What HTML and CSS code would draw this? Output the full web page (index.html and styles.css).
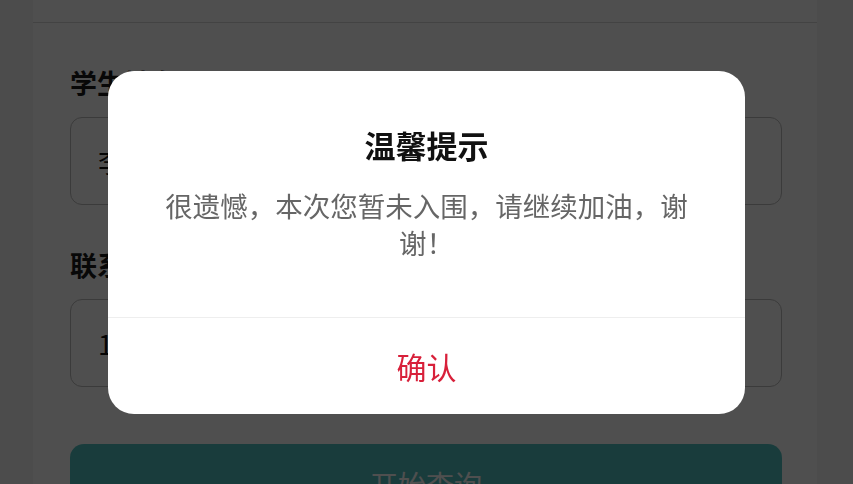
FILE: index.html
```html
<!DOCTYPE html>
<html lang="zh-CN">
<head>
<meta charset="utf-8">
<title>查询</title>
<link rel="stylesheet" href="styles.css">
</head>
<body>
<div class="page">
  <div class="topbar"></div>
  <form class="form">
    <div class="label">学生姓名</div>
    <div class="field">李明</div>
    <div class="label label-second">联系电话</div>
    <div class="field">13800000000</div>
    <button type="button" class="submit">开始查询</button>
  </form>
</div>
<div class="mask">
  <div class="dialog">
    <div class="dialog-body">
      <div class="dialog-title">温馨提示</div>
      <div class="dialog-text">很遗憾，本次您暂未入围，请继续加油，谢谢！</div>
    </div>
    <div class="dialog-footer">确认</div>
  </div>
</div>
</body>
</html>
```
FILE: styles.css
```css
* { box-sizing: border-box; }
html, body { margin: 0; padding: 0; }
body {
  width: 853px;
  height: 484px;
  overflow: hidden;
  background: #f6f6f6;
  font-family: "Noto Sans CJK SC", "Noto Sans", sans-serif;
}
.page {
  margin: 0 36px 0 33px;
  background: #fff;
  height: 484px;
}
.topbar {
  height: 23px;
  border-bottom: 1px solid #d8d8d8;
}
.form {
  padding: 42px 35px 0 37px;
  display: flex;
  flex-direction: column;
}
.label {
  font-size: 27px;
  line-height: 36px;
  font-weight: 700;
  color: #1a1a1a;
}
.label-second { margin-top: 42px; }
.field {
  margin-top: 16px;
  height: 88px;
  border: 1px solid #bdbdbd;
  border-radius: 12px;
  padding: 0 27px;
  display: flex;
  align-items: center;
  font-size: 27px;
  color: #111;
}
.submit {
  margin-top: 57px;
  height: 80px;
  border: none;
  border-radius: 14px;
  background: #53c2c2;
  color: #fff;
  font-family: inherit;
  font-size: 28px;
  line-height: 36px;
  padding: 0;
}
.mask {
  position: fixed;
  inset: 0;
  background: rgba(0, 0, 0, 0.69);
  display: flex;
  align-items: center;
  justify-content: center;
}
.dialog {
  width: 637px;
  height: 343px;
  background: #fff;
  border-radius: 26px;
  display: flex;
  flex-direction: column;
  overflow: hidden;
}
.dialog-body {
  flex: 1;
  padding: 54px 46px 0 46px;
  text-align: center;
  border-bottom: 1px solid #eeeeee;
}
.dialog-title {
  font-size: 31px;
  line-height: 40px;
  font-weight: 700;
  color: #111;
}
.dialog-text {
  margin-top: 22px;
  font-size: 27.5px;
  line-height: 37px;
  color: #666;
}
.dialog-footer {
  height: 96px;
  display: flex;
  align-items: center;
  justify-content: center;
  font-size: 30px;
  color: #d8203a;
}
```
